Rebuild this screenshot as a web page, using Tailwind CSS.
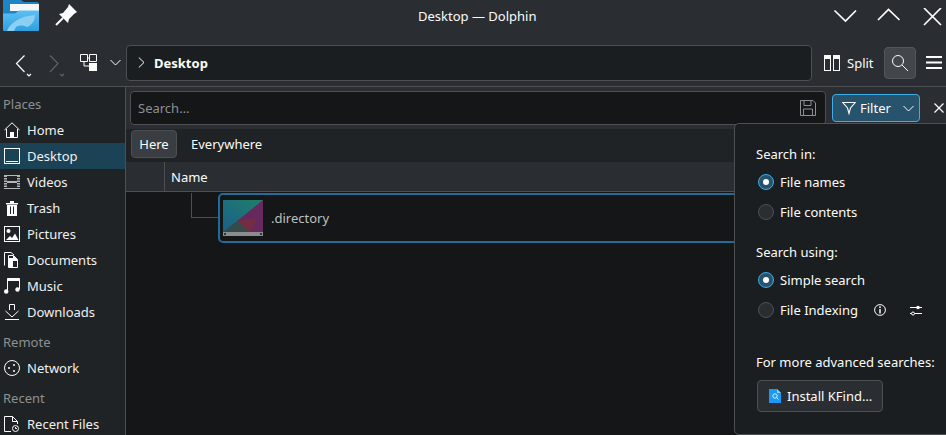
<!DOCTYPE html>
<html lang="en">
<head>
  <meta charset="UTF-8">
  <title>Desktop — Dolphin</title>
  <script src="https://cdn.jsdelivr.net/npm/@tailwindcss/browser@4"></script>
</head>
<body class="w-[946px] h-[435px] overflow-hidden bg-[#2a2e32] text-[#fcfcfc] font-['Noto_Sans',sans-serif] text-[13px] leading-[18px]">
<div class="relative w-[946px] h-[435px] overflow-hidden flex flex-col">

  <!-- titlebar -->
  <div class="h-[43px] shrink-0 flex items-start relative">
    <svg class="ml-[3px] mt-0" width="36" height="32" viewBox="0 0 36 32">
      <defs><linearGradient id="front" x1="0" y1="0" x2="0" y2="1"><stop offset="0" stop-color="#5cc0f2"/><stop offset="1" stop-color="#2f9fe0"/></linearGradient></defs>
      <path d="M0 0H18L21 2H34Q36 2 36 4V14H0Z" fill="#1d84c6"/>
      <rect x="7" y="4" width="29" height="7" fill="#f4f6f7"/>
      <path d="M0 13.500H12L16 10.500H36V30Q36 31 35 31H1Q0 31 0 30Z" fill="url(#front)"/>
      <path d="M4 31 C7 23 17 16 32 15 C32 21 28 26 24 27 C21 25 16 25 13 27 L11 31Z" fill="#8ccff2"/>
    </svg>
    <svg class="ml-[15px] mt-[3px]" width="24" height="24" viewBox="0 0 24 24">
      <path d="M15 1 L23 9 L20 11 L15 16 L14 20 L5 11 L9 10 L14 4Z" fill="#fcfcfc"/>
      <path d="M9 15 L2 22" stroke="#fcfcfc" stroke-width="2"/>
    </svg>
    <div class="absolute left-[418px] top-[7px]">Desktop — Dolphin</div>
    <div class="absolute left-[833px] top-[8px] flex">
      <svg width="24" height="16" viewBox="0 0 24 16"><path d="M1.500 2.500 L12.500 13 L23 2.500" fill="none" stroke="#fcfcfc" stroke-width="1.700"/></svg>
      <svg class="ml-[20px]" width="24" height="16" viewBox="0 0 24 16"><path d="M1 12 L11.500 1.500 L22.500 12" fill="none" stroke="#fcfcfc" stroke-width="1.700"/></svg>
      <svg class="ml-[22px]" width="20" height="18" viewBox="0 0 20 18"><path d="M1 0 L18 17 M18 0 L1 17" fill="none" stroke="#fcfcfc" stroke-width="1.700"/></svg>
    </div>
  </div>

  <!-- toolbar -->
  <div class="h-[44px] shrink-0 pb-[4px] flex items-center border-b border-[#4d5053] relative">
    <svg class="ml-[15px]" width="18" height="28" viewBox="0 0 18 28"><path d="M9.500 6.500 L1.500 14.500 L9.500 23" fill="none" stroke="#fcfcfc" stroke-width="1.200"/><path d="M12 25 L14 27 L16 25" fill="none" stroke="#fcfcfc" stroke-width="1.200"/></svg>
    <svg class="ml-[15px]" width="18" height="28" viewBox="0 0 18 28"><path d="M2 6.500 L10 14.500 L2 23" fill="none" stroke="#5f6265" stroke-width="1.200"/><path d="M12 25 L14 27 L16 25" fill="none" stroke="#5f6265" stroke-width="1.200"/></svg>
    <svg class="ml-[14px]" width="17" height="17" viewBox="0 0 17 17"><path d="M.5 .5H7.500V7.500H.5Z M9.500 .5H16.500V7.500H9.500Z" fill="none" stroke="#fcfcfc"/><path d="M7.500 4H9.500 M4 7.500V12H9" stroke="#fcfcfc" fill="none"/><rect x="9" y="9" width="8" height="8" fill="#fcfcfc"/></svg>
    <svg class="ml-[13px]" width="11" height="7" viewBox="0 0 11 7"><path d="M.5 1 L5.500 6 L10.500 1" fill="none" stroke="#fcfcfc"/></svg>
    <div class="ml-[5px] w-[686px] h-[36px] rounded-[4px] border border-[#4d5053] bg-[#1b1e20] flex items-center">
      <svg class="ml-[11px]" width="7" height="11" viewBox="0 0 7 11"><path d="M.8 .5 L6 5.500 L.8 10.500" fill="none" stroke="#fcfcfc"/></svg>
      <span class="ml-[9px] font-bold">Desktop</span>
    </div>
    <svg class="ml-[12px]" width="16" height="16" viewBox="0 0 16 16"><rect x=".5" y=".5" width="6" height="15" fill="none" stroke="#fcfcfc"/><rect x="9.500" y=".5" width="6" height="15" fill="none" stroke="#fcfcfc"/><rect x="0" y="0" width="7" height="4" fill="#fcfcfc"/><rect x="9" y="0" width="7" height="4" fill="#fcfcfc"/></svg>
    <span class="ml-[7px]">Split</span>
    <div class="ml-[10px] w-[32px] h-[32px] rounded-[4px] bg-[#43464a] border border-[#54575a] flex items-center justify-center">
      <svg width="18" height="18" viewBox="0 0 18 18"><circle cx="7" cy="7" r="5.500" fill="none" stroke="#fcfcfc"/><path d="M11 11 L17 17" stroke="#fcfcfc"/></svg>
    </div>
    <svg class="ml-[10px]" width="16" height="13" viewBox="0 0 16 13"><path d="M0 1H16M0 6.500H16M0 12H16" stroke="#fcfcfc" stroke-width="2"/></svg>
  </div>

  <div class="flex-1 flex min-h-0">
    <!-- sidebar -->
    <div class="w-[126px] shrink-0 bg-[#202326] border-r border-[#4d5053] pt-[7px]">
      <div class="h-[20px] pl-[3px] flex items-center text-[#8d9093]">Places</div>
      <div class="h-[26px] mt-[3px] pl-[4px] flex items-center gap-[7px]">
        <svg width="16" height="16" viewBox="0 0 16 16"><path d="M.5 8 L8 .8 L15.500 8 M2.500 7V15.500H13.500V7" fill="none" stroke="#fcfcfc"/><rect x="6" y="10" width="4" height="5.500" fill="#fcfcfc"/></svg><span class="text-[#eff0f1]">Home</span>
      </div>
      <div class="h-[26px] pl-[4px] flex items-center gap-[7px] bg-[#1c4255]">
        <svg width="16" height="16" viewBox="0 0 16 16"><rect x=".5" y=".5" width="15" height="15" fill="none" stroke="#fcfcfc"/><path d="M2 13.500H14" stroke="#fcfcfc"/></svg><span class="text-[#eff0f1]">Desktop</span>
      </div>
      <div class="h-[26px] pl-[4px] flex items-center gap-[7px]">
        <svg width="16" height="16" viewBox="0 0 16 16"><path d="M0 1H16V15H0Z" fill="#b5b7b9"/><rect x="3" y="2" width="10" height="5" fill="#202326"/><rect x="3" y="9" width="10" height="5" fill="#202326"/><path d="M0 3.500H3M0 6H3M0 8.500H3M0 11H3M0 13.500H3M13 3.500H16M13 6H16M13 8.500H16M13 11H16M13 13.500H16" stroke="#202326"/></svg><span class="text-[#eff0f1]">Videos</span>
      </div>
      <div class="h-[26px] pl-[4px] flex items-center gap-[7px]">
        <svg width="16" height="16" viewBox="0 0 16 16"><path d="M2 3H14V4.500H2Z M6 1H10V3H6Z" fill="#fcfcfc"/><path d="M3 5H13V16H3Z" fill="#fcfcfc"/><path d="M6.500 6.500V14M9.500 6.500V14" stroke="#202326"/></svg><span class="text-[#eff0f1]">Trash</span>
      </div>
      <div class="h-[26px] pl-[4px] flex items-center gap-[7px]">
        <svg width="16" height="16" viewBox="0 0 16 16"><rect x=".5" y=".5" width="15" height="15" fill="none" stroke="#fcfcfc"/><circle cx="4.500" cy="5" r="2" fill="#fcfcfc"/><path d="M2 14 L6 10 L8 12 L11 7.500 L14.500 14Z" fill="#fcfcfc"/></svg><span class="text-[#eff0f1]">Pictures</span>
      </div>
      <div class="h-[26px] pl-[4px] flex items-center gap-[7px]">
        <svg width="16" height="16" viewBox="0 0 16 16"><path d="M.5 13.500V.5H7L10 3" fill="none" stroke="#fcfcfc"/><path d="M4.500 3.500H9.500L13.500 7.500V15.500H4.500Z" fill="none" stroke="#fcfcfc"/><path d="M9 4H10L13.500 7.500V9H9Z" fill="#fcfcfc"/><path d="M5 6H9V15H5Z" fill="#fcfcfc"/></svg><span class="text-[#eff0f1]">Documents</span>
      </div>
      <div class="h-[26px] pl-[4px] flex items-center gap-[7px]">
        <svg width="16" height="16" viewBox="0 0 16 16"><path d="M3.500 13V.5H15.500V11" fill="none" stroke="#fcfcfc"/><path d="M3.500 .5H15.500V3H3.500Z" fill="#fcfcfc"/><circle cx="2.200" cy="13.500" r="2.200" fill="#fcfcfc"/><circle cx="13.500" cy="11.500" r="2.200" fill="#fcfcfc"/></svg><span class="text-[#eff0f1]">Music</span>
      </div>
      <div class="h-[26px] pl-[4px] flex items-center gap-[7px]">
        <svg width="16" height="16" viewBox="0 0 16 16"><path d="M5.500 6V.5H10.500V6 M1.500 7 L8 13 L14.500 7" fill="none" stroke="#fcfcfc"/><path d="M1 15.500H15" stroke="#fcfcfc"/></svg><span class="text-[#eff0f1]">Downloads</span>
      </div>
      <div class="h-[20px] mt-[7px] pl-[3px] flex items-center text-[#8d9093]">Remote</div>
      <div class="h-[26px] mt-[3px] pl-[4px] flex items-center gap-[7px]">
        <svg width="16" height="16" viewBox="0 0 16 16"><circle cx="8" cy="8" r="7.500" fill="none" stroke="#fcfcfc"/><circle cx="5" cy="8" r="1" fill="#fcfcfc"/><circle cx="10" cy="5" r="1" fill="#fcfcfc"/><circle cx="10" cy="11" r="1" fill="#fcfcfc"/></svg><span class="text-[#eff0f1]">Network</span>
      </div>
      <div class="h-[20px] mt-[7px] pl-[3px] flex items-center text-[#8d9093]">Recent</div>
      <div class="h-[26px] mt-[3px] pl-[4px] flex items-center gap-[7px]">
        <svg width="16" height="16" viewBox="0 0 16 16"><path d="M7 15.500H.5V.5H8.500L13.500 5.500V8" fill="none" stroke="#fcfcfc"/><path d="M8.500 .5V5.500H13.500" fill="none" stroke="#fcfcfc"/><circle cx="11.500" cy="12.500" r="3" fill="none" stroke="#fcfcfc"/><path d="M11.500 11V12.500H13" fill="none" stroke="#fcfcfc"/></svg><span class="text-[#eff0f1]">Recent Files</span>
      </div>
    </div>

    <!-- main -->
    <div class="flex-1 flex flex-col min-w-0 relative">
      <!-- search row -->
      <div class="h-[42px] shrink-0 pt-[4px] pl-[4px] flex items-start">
        <div class="w-[696px] h-[34px] rounded-[4px] border border-[#4d5053] bg-[#141618] flex items-center pl-[7px]">
          <span class="text-[#8d9093]">Search…</span>
          <svg class="ml-auto mr-[9px]" width="16" height="16" viewBox="0 0 16 16"><path d="M.5 .5H13L15.500 3V15.500H.5Z M4 .5V5.500H11V.5 M3.500 15.500V9H12.500V15.500" fill="none" stroke="#8d9093"/></svg>
        </div>
        <div class="ml-[6px] mt-[3px] w-[88px] h-[28px] rounded-[4px] border border-[#3daee9] bg-[#28536c] flex items-center pl-[9px]">
          <svg width="14" height="14" viewBox="0 0 14 14"><path d="M.8 1.500H13.200L8.500 7 7 12.500 5.500 7Z" fill="none" stroke="#fcfcfc" stroke-width="1.100"/></svg>
          <span class="ml-[4px]">Filter</span>
          <svg class="ml-[12px]" width="11" height="7" viewBox="0 0 11 7"><path d="M.5 1 L5.500 6 L10.500 1" fill="none" stroke="#fcfcfc"/></svg>
        </div>
        <svg class="ml-[14px] mt-[12px]" width="10" height="10" viewBox="0 0 10 10"><path d="M.5 .5 L9.500 9.500 M9.500 .5 L.5 9.500" stroke="#fcfcfc" stroke-width="1.200"/></svg>
      </div>

      <!-- here/everywhere -->
      <div class="h-[33px] shrink-0 bg-[#202326] flex items-center pl-[5px] pb-[4px]">
        <div class="w-[46px] h-[28px] rounded-[4px] bg-[#3a3d41] border border-[#4d5053] flex items-center justify-center">Here</div>
        <span class="ml-[14px]">Everywhere</span>
      </div>

      <!-- header -->
      <div class="h-[30px] shrink-0 bg-[#2a2e32] border-b border-[#4d5053] flex items-center">
        <div class="w-[39px] h-full border-r border-[#4d5053]"></div>
        <span class="ml-[6px]">Name</span>
      </div>

      <!-- tree -->
      <div class="flex-1 bg-[#141618] relative pt-[1px]">
        <div class="flex items-start">
          <div class="ml-[65px] w-[27px] h-[25px] border-l border-b border-[#4d5053]"></div>
          <div class="w-[560px] h-[50px] rounded-[5px] border-2 border-[#1f6d99] flex items-center pl-[3px]">
            <svg width="40" height="36" viewBox="0 0 40 36">
              <defs><linearGradient id="thumb" x1="0" y1="1" x2="1" y2="0"><stop offset="0" stop-color="#1b5f8c"/><stop offset="1" stop-color="#1f8068"/></linearGradient></defs>
              <rect width="40" height="32" fill="url(#thumb)"/>
              <path d="M40 0V32H27L14 21Z" fill="#65295f"/>
              <path d="M14 21L34 18L28 32H27Z" fill="#742c42"/>
              <path d="M14 21L27 32H0Z" fill="#374a4a"/>
              <rect y="32" width="40" height="4" fill="#8a8c8e"/>
              <rect x="37" y="33" width="2" height="2" fill="#333"/>
              <rect x="1" y="33" width="2" height="2" fill="#333"/>
            </svg>
            <span class="ml-[8px] text-[#bdc0c2]">.directory</span>
          </div>
        </div>
      </div>
    </div>
  </div>

  <!-- popup -->
  <div class="absolute left-[734px] top-[123px] w-[230px] h-[312px] rounded-[5px] border border-[#4d5053] bg-[#1b1e20] pl-[21px] pt-[20px]">
    <div class="h-[20px] flex items-center">Search in:</div>
    <div class="h-[30px] mt-[3px] flex items-center">
      <span class="ml-[2px] w-[16px] h-[16px] rounded-full border border-[#3daee9] bg-[#28536c] flex items-center justify-center"><span class="w-[6px] h-[6px] rounded-full bg-white"></span></span>
      <span class="ml-[6px]">File names</span>
    </div>
    <div class="h-[30px] flex items-center">
      <span class="ml-[2px] w-[16px] h-[16px] rounded-full border border-[#4d5053] bg-[#2a2e32]"></span>
      <span class="ml-[6px]">File contents</span>
    </div>
    <div class="h-[20px] mt-[15px] flex items-center">Search using:</div>
    <div class="h-[30px] mt-[3px] flex items-center">
      <span class="ml-[2px] w-[16px] h-[16px] rounded-full border border-[#3daee9] bg-[#28536c] flex items-center justify-center"><span class="w-[6px] h-[6px] rounded-full bg-white"></span></span>
      <span class="ml-[6px]">Simple search</span>
    </div>
    <div class="h-[30px] flex items-center">
      <span class="ml-[2px] w-[16px] h-[16px] rounded-full border border-[#4d5053] bg-[#2a2e32]"></span>
      <span class="ml-[6px]">File Indexing</span>
      <svg class="ml-[16px]" width="12" height="12" viewBox="0 0 12 12"><circle cx="6" cy="6" r="5.400" fill="none" stroke="#fcfcfc"/><path d="M6 5V9.500" stroke="#fcfcfc" stroke-width="1.500"/><circle cx="6" cy="3.200" r=".9" fill="#fcfcfc"/></svg>
      <svg class="ml-[24px]" width="12" height="12" viewBox="0 0 12 12"><path d="M0 3.500H12M0 9.500H12" stroke="#fcfcfc"/><circle cx="8" cy="3.500" r="1.800" fill="#fcfcfc"/><circle cx="3" cy="9.500" r="1.500" fill="#1b1e20" stroke="#fcfcfc"/></svg>
    </div>
    <div class="h-[20px] mt-[27px] flex items-center whitespace-nowrap">For more advanced searches:</div>
    <div class="mt-[8px] ml-[1px] w-[126px] h-[32px] rounded-[4px] border border-[#4d5053] bg-[#2a2e32] flex items-center pl-[11px]">
      <svg width="12" height="14" viewBox="0 0 12 14"><path d="M0 0H8L12 4V14H0Z" fill="#1d99f3"/><path d="M8 0L12 4H8Z" fill="#8fd0f8"/><circle cx="6" cy="7" r="2.200" fill="none" stroke="#d5eefc"/><path d="M7.500 8.500L9.500 10.500" stroke="#d5eefc"/></svg>
      <span class="ml-[6px] whitespace-nowrap">Install KFind…</span>
    </div>
  </div>
</div>
</body>
</html>
